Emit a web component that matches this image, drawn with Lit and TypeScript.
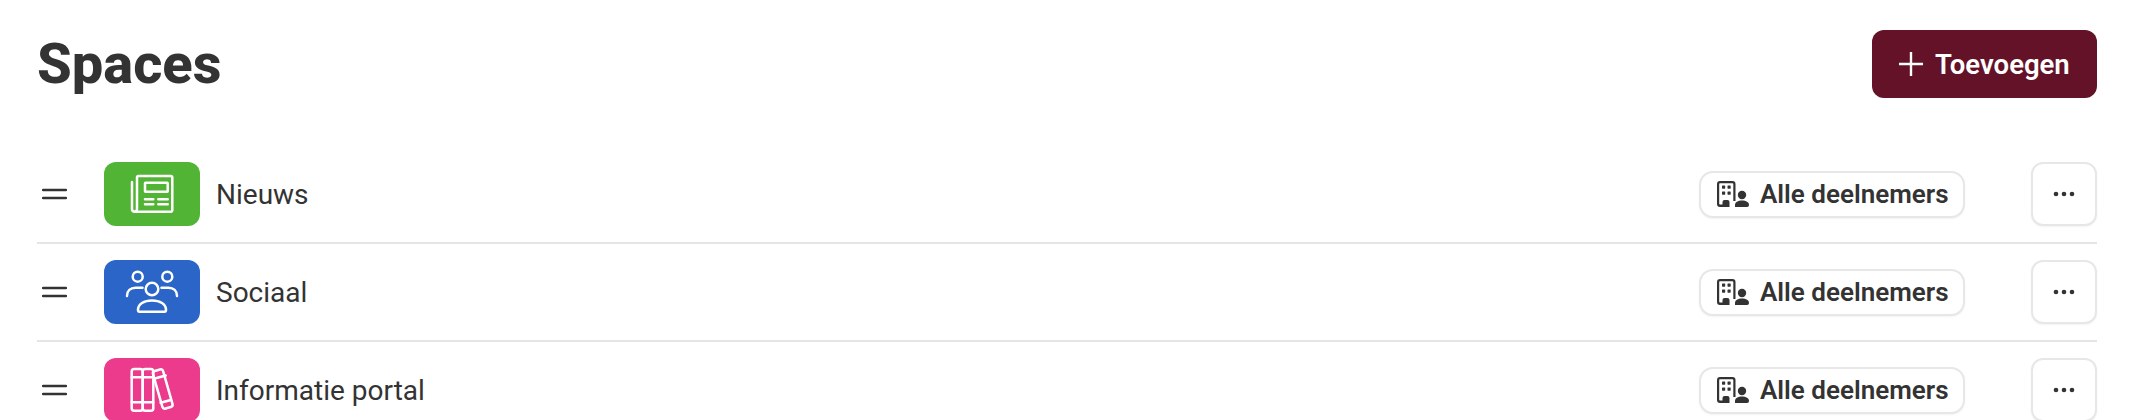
import { LitElement, html, css, svg } from "lit";
import { customElement } from "lit/decorators.js";

const news = svg`<path d="M28 20v27a2.500 2.500 0 0 0 5 0V15.500a1.500 1.500 0 0 1 1.500-1.500h32.300a1.500 1.500 0 0 1 1.500 1.500v32.700a1.500 1.500 0 0 1-1.500 1.500H30.500A2.500 2.500 0 0 1 28 47"/><rect x="41" y="20.700" width="22.700" height="9" rx=".5"/><path d="M41 37.300h8.300M54.300 37.300h9.400M41 42.300h8.300M54.300 42.300h9.400"/>`;
const people = svg`<circle cx="33.700" cy="16.700" r="5"/><circle cx="63.300" cy="16.700" r="5"/><circle cx="48" cy="29" r="6.300"/><path d="M23 36c0-5 3.500-8.300 8.500-8.300h7M73 36c0-5-3.500-8.300-8.500-8.300h-7"/><path d="M34 50c0-6 6-9.500 14-9.500s14 3.500 14 9.500c0 1-.5 1.700-1.500 1.700h-25c-1 0-1.500-.7-1.500-1.700z"/>`;
const books = svg`<rect x="27.700" y="11" width="11" height="41.700" rx="2.500"/><rect x="38.700" y="11" width="10.600" height="41.700" rx="2.500"/><path d="M27.700 19.300h21.600M27.700 44.300h21.600"/><rect x="53.500" y="11.500" width="10.500" height="39" rx="2.500" transform="rotate(-16 58.750 31)"/><path d="M51.700 20.300l10-2.800M56.700 44.800l10-2.800"/>`;

const rows = [
  { name: "Nieuws", color: "#52b435", icon: news },
  { name: "Sociaal", color: "#2b65c8", icon: people },
  { name: "Informatie portal", color: "#ec3a8c", icon: books },
];

@customElement("app-root")
export class AppRoot extends LitElement {
  static styles = css`
    :host { display: block; height: 420px; overflow: hidden; background: #fff; font-family: Roboto, sans-serif; color: #333; }
    .page { padding: 30px 39px 0 37px; }
    .head { display: flex; justify-content: space-between; align-items: center; height: 68px; margin-bottom: 48px; }
    h1 { margin: 0; font-size: 56px; line-height: 68px; font-weight: 800; color: #333; }
    .add { display: flex; align-items: center; gap: 12px; width: 225px; height: 68px; box-sizing: border-box; padding-left: 27px; background: #631228; color: #fff; border-radius: 12px; font-size: 27.500px; font-weight: 600; border: 0; font-family: inherit; }
    .add svg { width: 24px; height: 24px; fill: none; stroke: #fff; stroke-width: 2.400; }
    .row { display: flex; align-items: center; height: 96px; border-bottom: 2px solid #e5e5e5; }
    .row:last-child { border-bottom: 0; }
    .drag { width: 67px; flex: none; display: flex; }
    .drag svg { width: 25px; height: 12px; margin-left: 5px; }
    .tile { width: 96px; height: 64px; border-radius: 12px; display: flex; flex: none; }
    .tile svg { fill: none; stroke: #fff; stroke-width: 2.500; stroke-linecap: round; stroke-linejoin: round; width: 96px; height: 64px; }
    .name { margin-left: 16px; font-size: 28px; color: #333; flex: 1; }
    .pill { display: flex; align-items: center; gap: 10px; width: 266px; height: 47px; box-sizing: border-box; padding-left: 16px; border: 2px solid #e7e7e7; border-radius: 14px; font-size: 26px; font-weight: 600; box-shadow: 0 1px 2px rgba(0,0,0,.05); background: #fff; }
    .pill svg { width: 33px; height: 26px; fill: #333; flex: none; }
    .more { margin-left: 66px; width: 66px; height: 64px; box-sizing: border-box; border: 2px solid #e7e7e7; border-radius: 12px; display: flex; align-items: center; justify-content: center; box-shadow: 0 1px 2px rgba(0,0,0,.05); background: #fff; }
    .more svg { width: 22px; height: 6px; fill: #333; }
  `;

  render() {
    return html`<div class="page">
      <div class="head">
        <h1>Spaces</h1>
        <button class="add"><svg viewBox="0 0 24 24"><path d="M12 0v24M0 12h24"/></svg>Toevoegen</button>
      </div>
      ${rows.map(
        (r) => html`<div class="row">
          <div class="drag"><svg viewBox="0 0 25 12"><path d="M1 2h23M1 10h23" stroke="#333" stroke-width="2.400" stroke-linecap="round"/></svg></div>
          <div class="tile" style="background:${r.color}"><svg viewBox="0 0 96 64">${r.icon}</svg></div>
          <div class="name">${r.name}</div>
          <div class="pill">
            <svg viewBox="0 0 33 26"><path fill-rule="evenodd" d="M3 0h12.500a3 3 0 0 1 3 3v17h-2.200V3a.8.800 0 0 0-.8-.8H3a.8.800 0 0 0-.8.800v19.800c0 .5.300.8.800.8h2.500V21a2 2 0 0 1 2-2h3a2 2 0 0 1 2 2v5H3a3 3 0 0 1-3-3V3a3 3 0 0 1 3-3z"/><rect x="5" y="4.500" width="3.200" height="3.200" rx=".6"/><rect x="10.500" y="4.500" width="3.200" height="3.200" rx=".6"/><rect x="5" y="10.500" width="3.200" height="3.200" rx=".6"/><rect x="10.500" y="10.500" width="3.200" height="3.200" rx=".6"/><circle cx="25" cy="14" r="4.200"/><path d="M18 26v-2c0-3 3-4.500 7-4.500s7 1.500 7 4.500v0a2 2 0 0 1-2 2z"/></svg>
            Alle deelnemers
          </div>
          <div class="more"><svg viewBox="0 0 22 6"><circle cx="3" cy="3" r="2.300"/><circle cx="11" cy="3" r="2.300"/><circle cx="19" cy="3" r="2.300"/></svg></div>
        </div>`
      )}
    </div>`;
  }
}
